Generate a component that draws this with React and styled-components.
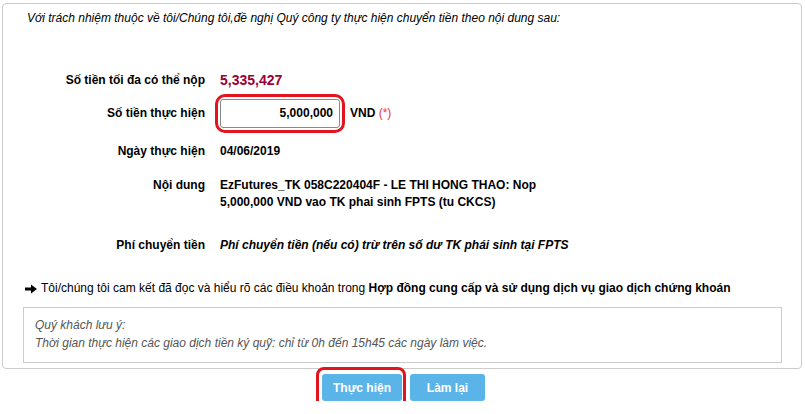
import React from 'react';
import styled, { createGlobalStyle } from 'styled-components';

const GlobalStyle = createGlobalStyle`
    body {
        margin: 0;
        background: #fff;
        font-family: "Liberation Sans", Arial, sans-serif;
        font-size: 12px;
        color: #000;
    }
`;

const Page = styled.div`
    padding: 3px 0 0 2px;
`;

const Panel = styled.div`
    width: 800px;
    box-sizing: border-box;
    border: 1px solid #cccccc;
    border-radius: 4px;
    padding-bottom: 5px;
`;

const Intro = styled.p`
    margin: 0;
    padding: 6px 0 0 24px;
    font-style: italic;
    line-height: 17px;
`;

const Form = styled.div`
    margin-top: 43px;
`;

const Row = styled.div`
    display: grid;
    grid-template-columns: 202px 1fr;
    column-gap: 15px;
    align-items: ${(props) => (props.top ? 'start' : 'center')};
    margin-top: ${(props) => props.gap || 0}px;
    line-height: 17px;
`;

const Label = styled.div`
    text-align: right;
    font-weight: bold;
`;

const Value = styled.div`
    font-weight: bold;
    ${(props) => props.italic && 'font-style: italic;'}
`;

const Amount = styled.div`
    font-size: 14px;
    font-weight: bold;
    line-height: 20px;
    color: #990033;
`;

const InputLine = styled.div`
    display: flex;
    align-items: center;
    gap: 10px;
    font-weight: bold;
`;

const Ring = styled.div`
    position: relative;
    &::after {
        content: '';
        position: absolute;
        inset: ${(props) => props.inset || '-5px'};
        border: 3px solid #e2141e;
        border-radius: ${(props) => props.radius || 10}px;
        pointer-events: none;
    }
`;

const AmountInput = styled.div`
    width: 120px;
    height: 29px;
    box-sizing: border-box;
    border: 1px solid #8a8a8a;
    border-radius: 3px;
    padding-right: 6px;
    display: flex;
    align-items: center;
    justify-content: flex-end;
    font-weight: bold;
`;

const Required = styled.span`
    color: #e8334a;
    font-weight: normal;
`;

const Commit = styled.div`
    margin-top: 26px;
    padding-left: 22px;
    display: flex;
    align-items: center;
    gap: 4px;
    line-height: 17px;
    b {
        font-weight: bold;
    }
`;

const Note = styled.div`
    margin: 10px 19px 0 20px;
    border: 1px solid #cccccc;
    padding: 8px 11px 10px;
    color: #555;
    font-style: italic;
    line-height: 18px;
`;

const Actions = styled.div`
    margin-top: 5px;
    display: flex;
    justify-content: center;
    gap: 8px;
`;

const Button = styled.button`
    width: ${(props) => props.w}px;
    height: 27px;
    border: none;
    border-radius: 3px;
    background: #5ab4e8;
    color: #fff;
    font-family: "Liberation Sans", Arial, sans-serif;
    font-size: 12px;
    font-weight: bold;
    padding: 0;
`;

const Arrow = () => (
    <svg width="12" height="10" viewBox="0 0 12 10">
        <path d="M0 3.5h6V0.5l6 4.5-6 4.5V6.5H0z" fill="#000" />
    </svg>
);

export default function App() {
    return (
        <Page>
            <GlobalStyle />
            <Panel>
                <Intro>Với trách nhiệm thuộc về tôi/Chúng tôi,đề nghị Quý công ty thực hiện chuyển tiền theo nội dung sau:</Intro>
                <Form>
                    <Row>
                        <Label>Số tiền tối đa có thể nộp</Label>
                        <Amount>5,335,427</Amount>
                    </Row>
                    <Row gap={9}>
                        <Label>Số tiền thực hiện</Label>
                        <InputLine>
                            <Ring>
                                <AmountInput>5,000,000</AmountInput>
                            </Ring>
                            <span>
                                VND <Required>(*)</Required>
                            </span>
                        </InputLine>
                    </Row>
                    <Row gap={15}>
                        <Label>Ngày thực hiện</Label>
                        <Value>04/06/2019</Value>
                    </Row>
                    <Row gap={17} top>
                        <Label>Nội dung</Label>
                        <Value>
                            EzFutures_TK 058C220404F - LE THI HONG THAO: Nop
                            <br />
                            5,000,000 VND vao TK phai sinh FPTS (tu CKCS)
                        </Value>
                    </Row>
                    <Row gap={26}>
                        <Label>Phí chuyển tiền</Label>
                        <Value italic>Phí chuyển tiền (nếu có) trừ trên số dư TK phái sinh tại FPTS</Value>
                    </Row>
                </Form>
                <Commit>
                    <Arrow />
                    <span>
                        Tôi/chúng tôi cam kết đã đọc và hiểu rõ các điều khoản trong{' '}
                        <b>Hợp đồng cung cấp và sử dụng dịch vụ giao dịch chứng khoán</b>
                    </span>
                </Commit>
                <Note>
                    Quý khách lưu ý:
                    <br />
                    Thời gian thực hiện các giao dịch tiền ký quỹ: chỉ từ 0h đến 15h45 các ngày làm việc.
                </Note>
            </Panel>
            <Actions>
                <Ring inset="-7px -4px -9px -6px" radius={8}>
                    <Button w={80}>Thực hiện</Button>
                </Ring>
                <Button w={75}>Làm lại</Button>
            </Actions>
        </Page>
    );
}
